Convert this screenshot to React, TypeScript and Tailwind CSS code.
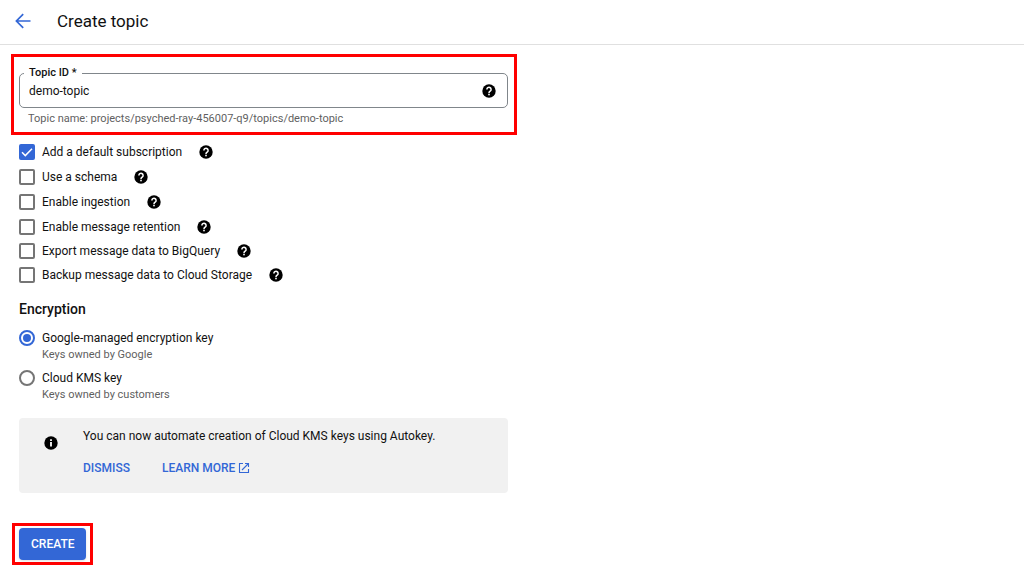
function BackArrowIcon() {
  return (
    <svg viewBox="0 0 22 22" aria-hidden="true" className="size-[22px] fill-none stroke-current">
      <path d="M18.5 11H4.8M11.2 4.2 4.4 11l6.8 6.8" strokeWidth="1.7" />
    </svg>
  );
}

function HelpIcon() {
  return (
    <svg viewBox="0 0 16 16" aria-hidden="true" className="size-4">
      <circle cx="8" cy="8" r="6.7" className="fill-black" />
      <path
        d="M5.9 6.5a2.1 2.1 0 1 1 3.5 1.5C8.6 8.6 8 8.9 8 9.9"
        className="fill-none stroke-white"
        strokeWidth="1.5"
      />
      <rect x="7.2" y="10.7" width="1.6" height="1.6" className="fill-white" />
    </svg>
  );
}

function InfoIcon() {
  return (
    <svg viewBox="0 0 16 16" aria-hidden="true" className="mt-2 size-4 shrink-0">
      <circle cx="8" cy="8" r="6.7" className="fill-black" />
      <path d="M7.1 4.3h1.8v1.7H7.1zM7.1 7h1.8v4.6H7.1z" className="fill-white" />
    </svg>
  );
}

function OpenInNewIcon() {
  return (
    <svg viewBox="0 0 14 14" aria-hidden="true" className="size-[14px] fill-none stroke-current">
      <path d="M6 2.5H2.5v9h9V8M8 2.5h3.5V6M11.5 2.5 5 9" strokeWidth="1.1" />
    </svg>
  );
}

function HelpButton({ label }: { label: string }) {
  return (
    <button type="button" aria-label={label} className="flex size-4 shrink-0 items-center justify-center">
      <HelpIcon />
    </button>
  );
}

function CheckRow({ id, label, checked = false }: { id: string; label: string; checked?: boolean }) {
  return (
    <div className="flex h-6 items-center">
      <span className="grid size-4 shrink-0 place-items-center">
        <input
          id={id}
          type="checkbox"
          defaultChecked={checked}
          className="peer col-start-1 row-start-1 size-4 appearance-none rounded-xs border-2 border-[#757575] bg-white checked:border-[#3367d6] checked:bg-[#3367d6]"
        />
        <svg
          viewBox="0 0 16 16"
          aria-hidden="true"
          className="pointer-events-none invisible col-start-1 row-start-1 size-4 fill-none stroke-white peer-checked:visible"
        >
          <path d="M3 8.3 6.3 11.6 13 4.8" strokeWidth="1.5" />
        </svg>
      </span>
      <label htmlFor={id} className="pr-4 pl-[7px]">
        {label}
      </label>
      <HelpButton label={`Help: ${label}`} />
    </div>
  );
}

function RadioRow({ id, label, hint, checked = false }: { id: string; label: string; hint: string; checked?: boolean }) {
  return (
    <div className="grid grid-cols-[16px_1fr] items-center gap-x-[7px]">
      <input
        id={id}
        type="radio"
        name="encryption"
        defaultChecked={checked}
        aria-describedby={`${id}-hint`}
        className="size-4 appearance-none rounded-full border-2 border-[#757575] bg-white checked:border-[#3367d6] checked:bg-[#3367d6] checked:bg-clip-content checked:p-[2px]"
      />
      <label htmlFor={id} className="leading-[18px]">
        {label}
      </label>
      <p id={`${id}-hint`} className="col-start-2 text-[11px] leading-4 text-[#5f5f5f]">
        {hint}
      </p>
    </div>
  );
}

export default function App() {
  return (
    <div className="min-h-screen bg-white font-['Roboto','Liberation_Sans',sans-serif] text-xs text-[#111111]">
      <header className="flex h-[45px] items-center gap-[23px] border-b border-[#e0e0e0] px-3 pb-[2px]">
        <a href="#topics" aria-label="Back to topics" className="text-[#3367d6]">
          <BackArrowIcon />
        </a>
        <h1 className="text-[17px] leading-6">Create topic</h1>
      </header>

      <form className="px-[11px] pt-[9px]" onSubmit={(e) => e.preventDefault()}>
        <div className="max-w-[506px] border-3 border-[#ff0000] pt-[9px] pr-[6px] pb-[5px] pl-[5px]">
          <fieldset className="rounded-[5px] border border-[#80868b] px-1">
            <legend className="px-[5px] text-[11px] leading-[14px] font-medium">
              <label htmlFor="topic-id">Topic ID *</label>
            </legend>
            <div className="flex h-[27px] items-start pr-[6px] pl-[5px]">
              <input
                id="topic-id"
                defaultValue="demo-topic"
                aria-describedby="topic-name"
                className="h-[22px] min-w-0 flex-1 bg-transparent outline-none"
              />
              <span className="pt-[3px]">
                <HelpButton label="Help: Topic ID" />
              </span>
            </div>
          </fieldset>
          <p id="topic-name" className="px-[9px] pt-[3px] text-[11px] leading-4 text-[#5f5f5f]">
            Topic name: projects/psyched-ray-456007-q9/topics/demo-topic
          </p>
        </div>

        <div className="px-2 pt-[5px]">
          <div className="flex flex-col gap-px">
            <CheckRow id="subscription" label="Add a default subscription" checked />
            <CheckRow id="schema" label="Use a schema" />
            <CheckRow id="ingestion" label="Enable ingestion" />
            <CheckRow id="retention" label="Enable message retention" />
          </div>
          <CheckRow id="bigquery" label="Export message data to BigQuery" />
          <CheckRow id="storage" label="Backup message data to Cloud Storage" />

          <section className="pt-3">
            <h2 id="encryption-title" className="text-sm leading-5 font-medium">
              Encryption
            </h2>
            <div role="radiogroup" aria-labelledby="encryption-title" className="flex flex-col gap-[6px] pt-[10px]">
              <RadioRow id="google-key" label="Google-managed encryption key" hint="Keys owned by Google" checked />
              <RadioRow id="kms-key" label="Cloud KMS key" hint="Keys owned by customers" />
            </div>
          </section>

          <aside className="mt-[15px] flex max-w-[489px] items-start rounded-sm bg-[#f1f1f1] px-6 pt-[9px] pb-4">
            <InfoIcon />
            <div className="pl-6">
              <p className="leading-[18px]">You can now automate creation of Cloud KMS keys using Autokey.</p>
              <div className="flex items-center gap-8 pt-[14px] font-medium text-[#3367d6]">
                <button type="button" className="leading-[18px]">
                  DISMISS
                </button>
                <a href="#autokey" className="flex items-center gap-[2px] leading-[18px]">
                  LEARN MORE
                  <OpenInNewIcon />
                </a>
              </div>
            </div>
          </aside>
        </div>

        <div className="mt-[30px] ml-px inline-flex border-3 border-[#ff0000] px-1 py-[2px]">
          <button type="submit" className="h-8 rounded-sm bg-[#3367d6] px-3 font-medium text-white shadow-sm">
            CREATE
          </button>
        </div>
      </form>
    </div>
  );
}
